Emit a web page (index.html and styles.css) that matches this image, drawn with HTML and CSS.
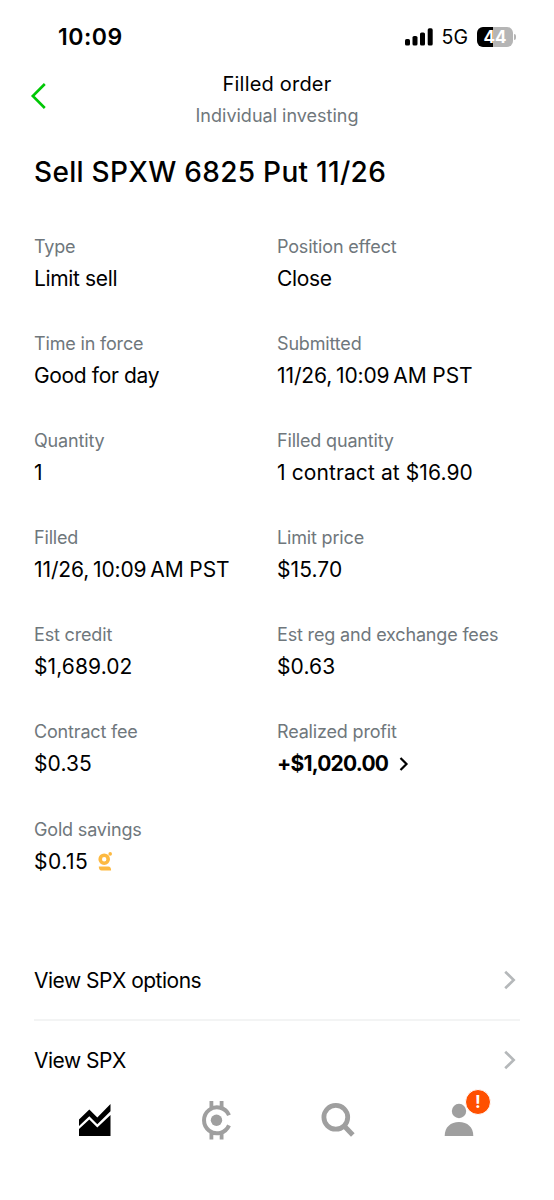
FILE: index.html
```
<!DOCTYPE html>
<html lang="en">
<head>
  <meta charset="UTF-8" />
  <meta name="viewport" content="width=device-width, initial-scale=1" />
  <title>Filled order</title>
  <link rel="stylesheet" href="styles.css">
</head>
<body>
  <div class="status-bar">
    <span class="clock">10:09</span>
    <div class="status-icons">
      <svg class="signal" width="28" height="18" viewBox="0 0 28 18" aria-hidden="true">
        <rect x="0" y="11" width="5" height="6.5" rx="1.6"/>
        <rect x="7.5" y="8" width="5" height="9.5" rx="1.6"/>
        <rect x="15" y="4.5" width="5" height="13" rx="1.6"/>
        <rect x="22.7" y="0.3" width="5" height="17.2" rx="1.6"/>
      </svg>
      <span class="network">5G</span>
      <span class="battery">44</span>
      <span class="battery-cap"></span>
    </div>
  </div>

  <header>
    <a class="back" href="#" aria-label="Back">
      <svg width="16" height="28" viewBox="0 0 16 28"><path d="M14.8 2l-12 12 12 12" fill="none" stroke="#00c805" stroke-width="2.6"/></svg>
    </a>
    <div class="heading">
      <div class="heading-title">Filled order</div>
      <div class="heading-sub">Individual investing</div>
    </div>
  </header>

  <main>
    <h1>Sell SPXW 6825 Put 11/26</h1>

    <dl class="details">
      <div class="item"><dt>Type</dt><dd class="text">Limit sell</dd></div>
      <div class="item"><dt>Position effect</dt><dd class="text">Close</dd></div>
      <div class="item"><dt>Time in force</dt><dd class="text">Good for day</dd></div>
      <div class="item"><dt>Submitted</dt><dd class="date">11/26,&thinsp;10:09&thinsp;AM PST</dd></div>
      <div class="item"><dt>Quantity</dt><dd>1</dd></div>
      <div class="item"><dt>Filled quantity</dt><dd>1 contract at $16.90</dd></div>
      <div class="item"><dt>Filled</dt><dd class="date">11/26,&thinsp;10:09&thinsp;AM PST</dd></div>
      <div class="item"><dt>Limit price</dt><dd>$15.70</dd></div>
      <div class="item"><dt>Est credit</dt><dd>$1,689.02</dd></div>
      <div class="item"><dt>Est reg and exchange fees</dt><dd>$0.63</dd></div>
      <div class="item"><dt>Contract fee</dt><dd>$0.35</dd></div>
      <div class="item">
        <dt>Realized profit</dt>
        <dd class="profit">+$1,020.00
          <svg width="10" height="14" viewBox="0 0 10 14"><path d="M1.5 1l6 6-6 6" fill="none" stroke="#000" stroke-width="2.2"/></svg>
        </dd>
      </div>
      <div class="item">
        <dt>Gold savings</dt>
        <dd class="gold">$0.15
          <svg width="15" height="20" viewBox="0 0 15 20" fill="#fdb940">
            <circle cx="6.2" cy="7.2" r="4" fill="none" stroke="#fdb940" stroke-width="3.6"/>
            <circle cx="12.2" cy="1.9" r="1.8"/>
            <path d="M.8 14.6h9.500c1.800 0 2.800 1.500 2.800 4H3.600C1.800 18.600.8 17.100.8 14.600z"/>
          </svg>
        </dd>
      </div>
    </dl>

    <nav class="links">
      <a href="#">View SPX options
        <svg width="12" height="20" viewBox="0 0 12 20"><path d="M1.2 1.7L9.7 10l-8.500 8.300" fill="none" stroke="#b5b8ba" stroke-width="2.6"/></svg>
      </a>
      <a href="#">View SPX
        <svg width="12" height="20" viewBox="0 0 12 20"><path d="M1.2 1.7L9.7 10l-8.500 8.300" fill="none" stroke="#b5b8ba" stroke-width="2.6"/></svg>
      </a>
    </nav>
  </main>

  <nav class="tabs">
    <a href="#" aria-label="Investing">
      <svg width="40" height="40" viewBox="0 0 40 40">
        <path d="M4 19.5L14.3 9.5l8 8L35.5 4v7.200l-13.200 13-8-8L4 26z"/>
        <path d="M4 29l10.300-9.500 8 8L35.500 15v21H4z"/>
      </svg>
    </a>
    <a href="#" aria-label="Crypto">
      <svg width="40" height="40" viewBox="0 0 40 40" fill="#9f9f9f">
        <path d="M33 15.200A13 13 0 1 0 33 25.400" fill="none" stroke="#9f9f9f" stroke-width="4"/>
        <circle cx="20.5" cy="20.3" r="5.7"/>
        <path d="M13.500 1h3.800v7h-3.800zM23.700 1h3.800v7h-3.800zM13.500 32.500h3.800v7h-3.800zM23.700 32.500h3.800v7h-3.800z"/>
      </svg>
    </a>
    <a href="#" aria-label="Search">
      <svg width="40" height="40" viewBox="0 0 40 40" fill="none" stroke="#9f9f9f">
        <circle cx="17.8" cy="17.3" r="11.9" stroke-width="4.8"/>
        <path d="M25.500 25.200l9.300 9.800" stroke-width="5"/>
      </svg>
    </a>
    <a class="account" href="#" aria-label="Account">
      <svg width="40" height="40" viewBox="0 0 40 40" fill="#9f9f9f">
        <circle cx="20" cy="11" r="7.2"/>
        <path d="M5.700 36C5.700 27 11.700 22 20 22s14.300 5 14.300 14z"/>
      </svg>
      <span class="badge">!</span>
    </a>
  </nav>
</body>
</html>
```
FILE: styles.css
```
* {
  box-sizing: border-box;
}
body {
  margin: 0;
  height: 1200px;
  overflow: hidden;
  display: flex;
  flex-direction: column;
  background: #fff;
  color: #000;
  font-family: Inter, 'Liberation Sans', sans-serif;
}
a {
  color: inherit;
  text-decoration: none;
}
.status-bar {
  height: 74px;
  padding: 0 38px 0 58px;
  display: flex;
  align-items: center;
  justify-content: space-between;
}
.clock {
  font-size: 23px;
  font-weight: 600;
  letter-spacing: 0.5px;
}
.status-icons {
  display: flex;
  align-items: center;
}
.network {
  margin-left: 9px;
  font-size: 19.5px;
}
.battery {
  width: 36px;
  height: 20px;
  margin-left: 9px;
  border-radius: 6px;
  background: linear-gradient(90deg, #000 45%, #b5b5b5 45%);
  color: #fff;
  font-size: 17px;
  font-weight: 700;
  line-height: 20px;
  text-align: center;
}
.battery-cap {
  width: 2px;
  height: 6px;
  margin-left: 1px;
  border-radius: 0 2px 2px 0;
  background: #b5b5b5;
}
header {
  height: 63px;
  padding: 0 30px;
  display: grid;
  grid-template-columns: 60px 1fr 60px;
}
.back {
  padding-top: 8px;
}
.heading {
  margin-top: -5px;
  text-align: center;
}
.heading-title {
  font-size: 20px;
  letter-spacing: 0.2px;
  line-height: 31px;
}
.heading-sub {
  color: #6f777c;
  font-size: 18px;
  line-height: 31px;
}
main {
  padding: 0 34px;
}
h1 {
  margin: 15px 0 0;
  font-size: 28px;
  font-weight: 500;
  letter-spacing: 0.3px;
  line-height: 40px;
  white-space: nowrap;
}
.details {
  margin: 39px 0 0;
  display: grid;
  grid-template-columns: 243px 1fr;
  grid-auto-rows: 97.1px;
}
dt {
  padding-top: 4px;
  color: #6f777c;
  font-size: 18px;
  letter-spacing: -0.17px;
  line-height: 24px;
  white-space: nowrap;
}
dd {
  margin: 6px 0 0;
  display: flex;
  align-items: center;
  font-size: 21px;
  letter-spacing: 0.1px;
  line-height: 28px;
  white-space: nowrap;
}
.text {
  letter-spacing: -0.35px;
}
.date {
  letter-spacing: -0.1px;
}
.profit {
  gap: 11px;
  font-weight: 700;
  letter-spacing: -0.8px;
}
.gold {
  gap: 10px;
  letter-spacing: 0.5px;
}
.links {
  margin-top: 31px;
}
.links a {
  height: 79px;
  display: flex;
  align-items: center;
  justify-content: space-between;
  padding-right: 4px;
  font-size: 21px;
  letter-spacing: -0.5px;
}
.links a:first-child {
  border-bottom: 2px solid #f3f4f4;
}
.tabs {
  position: absolute;
  top: 1100px;
  left: 75px;
  display: flex;
  gap: 81.3px;
}
.tabs a {
  height: 40px;
}
.account {
  position: relative;
}
.badge {
  position: absolute;
  top: -11px;
  left: 26px;
  width: 26px;
  height: 26px;
  border: 1px solid #fff;
  border-radius: 50%;
  background: #ff5000;
  color: #fff;
  font-size: 17px;
  font-weight: 700;
  line-height: 24px;
  text-align: center;
}
```
